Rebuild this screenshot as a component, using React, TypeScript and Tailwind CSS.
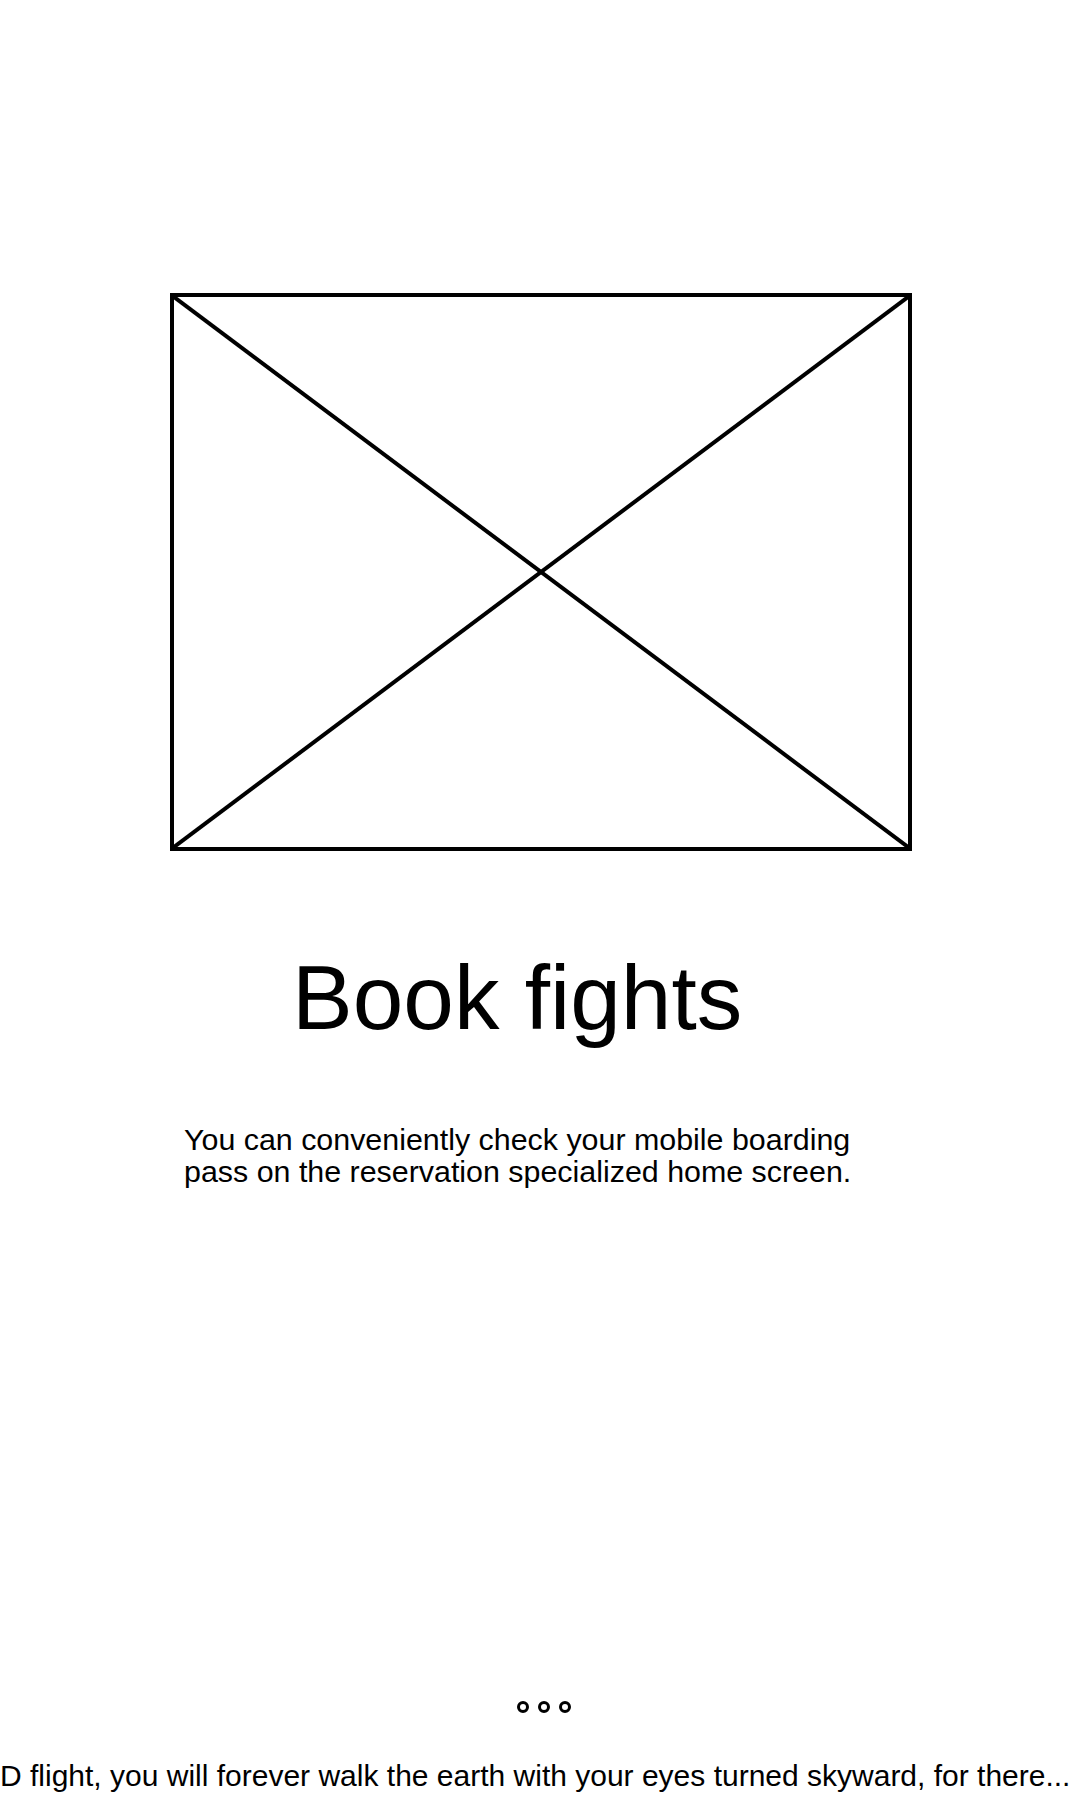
import React from "react";

const Placeholder = () => {
  return (
    <div className="relative ml-[170px] h-[558px] w-[742px] border-4 border-black">
      <svg
        className="absolute inset-0 h-full w-full"
        viewBox="0 0 734 550"
        preserveAspectRatio="none"
        aria-hidden="true"
      >
        <line x1="0" y1="0" x2="734" y2="550" stroke="black" strokeWidth="4" />
        <line x1="734" y1="0" x2="0" y2="550" stroke="black" strokeWidth="4" />
      </svg>
    </div>
  );
};

const Dots = () => {
  return (
    <div className="ml-[517px] flex gap-[9px]">
      <span className="h-[12px] w-[12px] rounded-full border-[3px] border-black" />
      <span className="h-[12px] w-[12px] rounded-full border-[3px] border-black" />
      <span className="h-[12px] w-[12px] rounded-full border-[3px] border-black" />
    </div>
  );
};

export default function App() {
  return (
    <div className="flex h-[1800px] w-[1080px] flex-col bg-white pt-[293px] font-['Liberation_Sans',Arial,sans-serif] text-black">
      <Placeholder />

      <h1 className="mt-[101px] pl-[292px] text-[91px] leading-none font-normal">
        Book fights
      </h1>

      <p className="mt-[80px] pl-[184px] text-[30.4px] leading-[32px]">
        You can conveniently check your mobile boarding
        <br />
        pass on the reservation specialized home screen.
      </p>

      <div className="mt-[514px]">
        <Dots />
      </div>

      <div className="mt-[48px] whitespace-nowrap text-[30px] leading-none">
        D flight, you will forever walk the earth with your eyes turned skyward, for there...
      </div>
    </div>
  );
}
